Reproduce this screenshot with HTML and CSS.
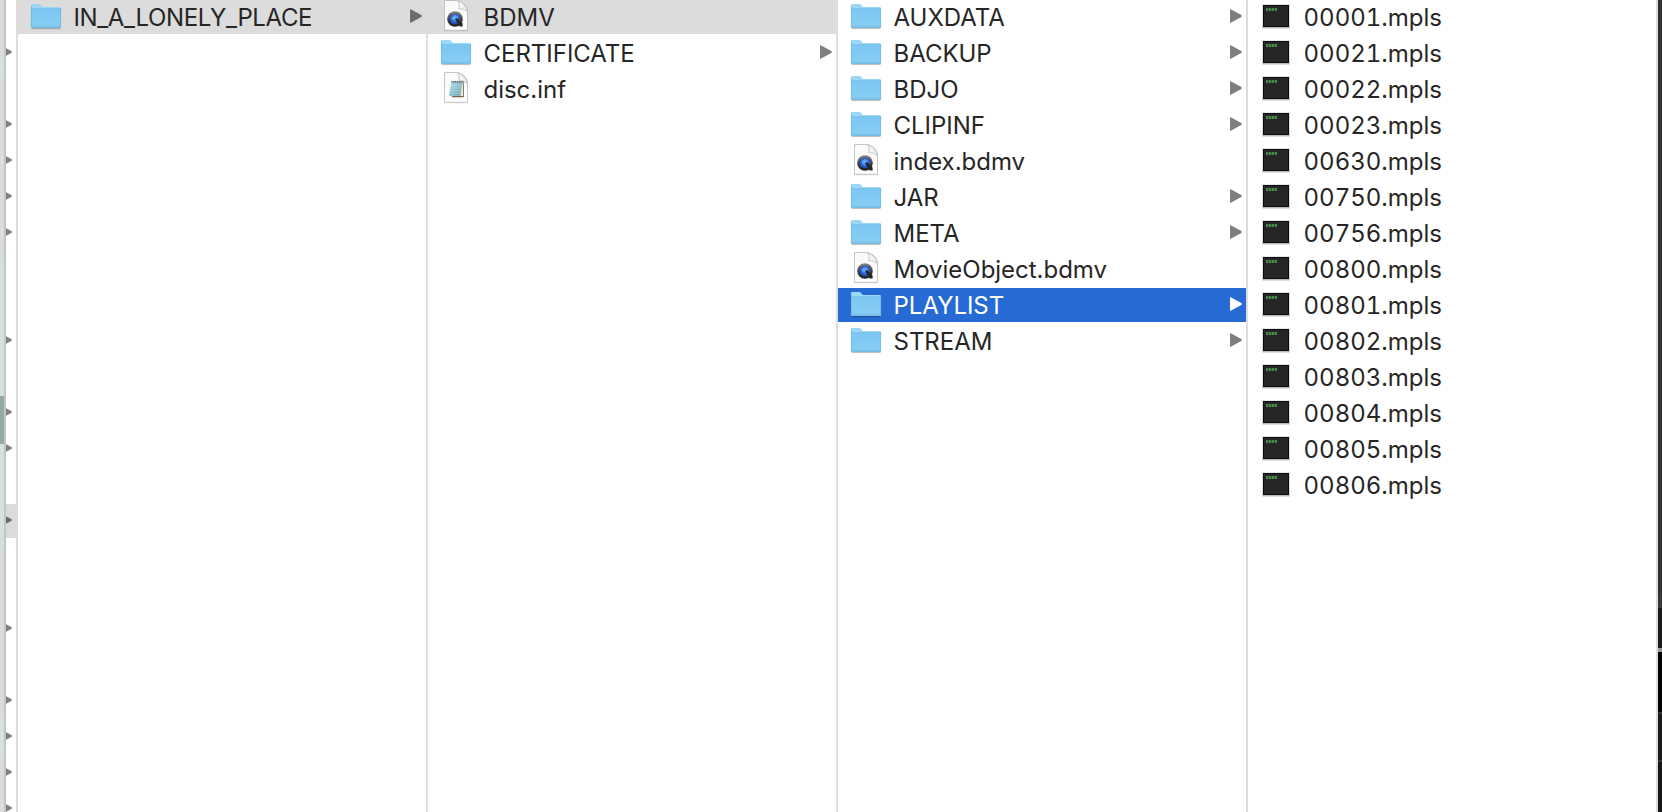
FILE: index.html
```html
<!DOCTYPE html>
<html lang="en">
<head>
<meta charset="utf-8">
<title>Finder</title>
<link rel="stylesheet" href="styles.css">
</head>
<body>
<svg class="defs" aria-hidden="true">
  <defs>
    <linearGradient id="gFolder" x1="0" y1="0" x2="0" y2="1"><stop offset="0" stop-color="#7bc6f1"/><stop offset="1" stop-color="#8ad0f7"/></linearGradient>
    <linearGradient id="gPaper" x1="0" y1="0" x2="0" y2="1"><stop offset="0" stop-color="#f9f9f9"/><stop offset="1" stop-color="#ffffff"/></linearGradient>
    <linearGradient id="gRing" x1="0" y1="0" x2="0" y2="1"><stop offset="0" stop-color="#85868a"/><stop offset=".55" stop-color="#3b3d42"/><stop offset="1" stop-color="#1e1f22"/></linearGradient>
    <radialGradient id="gBlue" cx=".5" cy=".45" r=".6"><stop offset="0" stop-color="#62a8ff"/><stop offset=".5" stop-color="#2f6fe0"/><stop offset="1" stop-color="#1a3a94"/></radialGradient>
    <linearGradient id="gPad" x1="0" y1="0" x2="1" y2="1"><stop offset="0" stop-color="#b5dce4"/><stop offset="1" stop-color="#5fa3b5"/></linearGradient>
    <symbol id="folder" viewBox="0 0 32 34">
      <path d="M1.500 28.500H30.500" stroke="#000" stroke-opacity=".25" stroke-width="1.200"/>
      <path d="M1 5.200Q1 4 2.200 4H9.500Q10.400 4 11 4.800L12.300 6.500Q12.700 7 13.500 7H29.800Q31 7 31 8.200V27Q31 28 30 28H2Q1 28 1 27Z" fill="#9bd7f8"/>
      <path d="M1 9H31V27Q31 28 30 28H2Q1 28 1 27Z" fill="url(#gFolder)"/>
      <path d="M1 8.700H31" stroke="#6fbbe6" stroke-width=".8"/>
      <path d="M1.500 26.200H30.500" stroke="#72b8df" stroke-width=".8"/>
      <path d="M1.400 6V27.500H30.600V8" fill="none" stroke="#6eb4db" stroke-width=".7"/>
    </symbol>
    <symbol id="sheet" viewBox="0 0 32 34">
      <path d="M4.500 .5H18.500L27.500 10V30.500H4.500Z" fill="#000" opacity=".12" transform="translate(0 .8)"/>
      <path d="M4.500 .5H18Q27.500 4 27.500 11V30.300H4.500Z" fill="url(#gPaper)" stroke="#b9b9b9" stroke-width=".8"/>
      <path d="M18 .6Q19.800 4.500 18.900 8.800Q24 8 27.400 11.500Q27 8 23.500 4.500Q21 1.800 18 .6Z" fill="#f4f4f4" stroke="#bdbdbd" stroke-width=".8"/>
    </symbol>
    <symbol id="movie" viewBox="0 0 32 34">
      <use href="#sheet"/>
      <circle cx="15" cy="19" r="7.800" fill="url(#gRing)"/>
      <circle cx="15" cy="19" r="5.300" fill="url(#gBlue)"/>
      <path d="M11.400 18.600Q12.400 15.400 15.600 15.200Q18 15.600 18.500 18Q15.500 16.500 14.800 19.500Q13 20.500 11.400 18.600Z" fill="#75b4ff" opacity=".6"/>
      <path d="M15 19L17.300 18.300L22.600 23.500V26.600H19.600Z" fill="#25272b"/>
    </symbol>
    <symbol id="note" viewBox="0 0 32 34">
      <use href="#sheet"/>
      <path d="M11.500 10.500H23.800V25.200H12Z" fill="#7a6440"/>
      <path d="M11.500 10H23V24L11.500 24Z" fill="#f0e9d6"/>
      <path d="M11.300 10H22.500L20.500 23.700H9Z" fill="url(#gPad)"/>
      <path d="M11 13.300H21.800M10.600 16H21.400M10.200 18.700H21M9.800 21.400H20.600" stroke="#d6ecef" stroke-width=".6" opacity=".75"/>
      <path d="M11.500 9.800H23.400" stroke="#41494b" stroke-width="1.600" stroke-dasharray="1.100 .7"/>
    </symbol>
    <symbol id="exec" viewBox="0 0 32 34">
      <path d="M2 27.700H30" stroke="#000" stroke-opacity=".35" stroke-width="1.300"/>
      <rect x="2.300" y="4.500" width="27.400" height="23" fill="#bfd3d9"/>
      <rect x="3" y="5" width="26" height="22" fill="#0c0c0c"/>
      <rect x="4" y="6" width="24" height="20" fill="#262626"/>
      <path d="M6 9.500H17" stroke="#55a957" stroke-width="2.600" stroke-dasharray="2.300 .6"/>
      <path d="M6.800 9.500H17" stroke="#2c4a2d" stroke-width=".7" stroke-dasharray="1 1.900"/>
    </symbol>
    <symbol id="arrow" viewBox="0 0 12 14">
      <path d="M.7 .3L11.300 6Q12.400 7 11.300 8L.7 13.700Q0 14 0 13.200V.8Q0 0 .7 .3Z" fill="currentColor"/>
    </symbol>
  </defs>
</svg>
<main class="browser" id="browser"></main>
<script src="app.js"></script>
</body>
</html>
```
FILE: styles.css
```css
* { box-sizing: border-box; }
html, body { margin: 0; height: 100%; overflow: hidden; background: #fff; }
.defs { display: block; width: 0; height: 0; position: absolute; }
.browser {
  display: flex;
  width: 1662px;
  height: 812px;
  color: #262626;
  font: 24px/34px Inter, "Noto Sans", sans-serif;
}
.sidebar {
  flex: 0 0 6px;
  border-right: 2px solid #c3c5c5;
  background: linear-gradient(#dcdcdc 0 50px, #d5e1e0 64px 70px, #dcdcdc 90px 220px, #d5e0df 270px 540px, #dcdcdc 570px 710px, #d5e1e2 725px 748px, #dcdcdc 765px);
}
.sidebar-mark { margin-top: 396px; height: 48px; background: #93aaa9; }
.column {
  flex: 0 0 410px;
  display: flex;
  flex-direction: column;
  gap: 2px;
  border-right: 2px solid #dedede;
  overflow: hidden;
}
.column.clipped { flex-basis: 12px; }
.row {
  flex: 0 0 34px;
  display: flex;
  align-items: center;
  height: 34px;
  padding: 0 4px 0 12px;
  white-space: nowrap;
}
.clipped .row { padding: 0; justify-content: flex-end; }
.clipped .arrow { margin-right: 4px; }
.icon { flex: none; width: 32px; height: 34px; margin-right: 11.5px; }
.label { flex: 1; padding-top: 2px; letter-spacing: -.02px; }
.wide { letter-spacing: -.37px; }
.digits { font-variant-numeric: tabular-nums; letter-spacing: 0; }
.arrow { flex: none; width: 12px; height: 14px; margin-top: -2px; color: #7f7f7f; }
.path { background: #dcdcdc; }
.path .arrow { color: #6d6d6d; }
.selected { background: #266bd3; color: #fff; }
.selected .arrow { color: #fff; }
.desktop {
  flex: 1;
  background: linear-gradient(#303131 0 590px, #3c3c3c 608px, #191919 608px 648px, #999 648px 652px, #000 652px 712px, #303030 712px 714px, #1a1a1a 714px 760px, #383838 760px 762px, #171717 762px);
}
```
FILE: app.js
```js
const folder = (name, state = "", text = "") => ({ name, icon: "folder", arrow: true, state, text });
const file = (name, icon, text = "") => ({ name, icon, state: "", text });

const openRows = [1, 3, 4, 5, 6, 9, 11, 12, 14, 17, 19, 20, 21, 22];
const clipped = Array.from({ length: 23 }, (_, i) => ({
  arrow: openRows.includes(i),
  state: i === 14 ? "path" : ""
}));

const columns = [
  [folder("IN_A_LONELY_PLACE", "path", "wide")],
  [{ name: "BDMV", icon: "movie", state: "path", text: "" }, folder("CERTIFICATE"), file("disc.inf", "note")],
  [
    folder("AUXDATA"), folder("BACKUP"), folder("BDJO"), folder("CLIPINF"),
    file("index.bdmv", "movie"), folder("JAR"), folder("META"),
    file("MovieObject.bdmv", "movie"), folder("PLAYLIST", "selected"), folder("STREAM")
  ],
  ["00001", "00021", "00022", "00023", "00630", "00750", "00756", "00800", "00801",
    "00802", "00803", "00804", "00805", "00806"].map(n => file(n + ".mpls", "exec", "digits"))
];

const row = r => `<div class="row ${r.state}">` +
  (r.icon ? `<svg class="icon"><use href="#${r.icon}"/></svg><span class="label ${r.text}">${r.name}</span>` : "") +
  (r.arrow ? `<svg class="arrow"><use href="#arrow"/></svg>` : "") + `</div>`;

document.getElementById("browser").innerHTML =
  `<aside class="sidebar"><div class="sidebar-mark"></div></aside>` +
  `<section class="column clipped">${clipped.map(row).join("")}</section>` +
  columns.map(c => `<section class="column">${c.map(row).join("")}</section>`).join("") +
  `<div class="desktop"></div>`;
```
